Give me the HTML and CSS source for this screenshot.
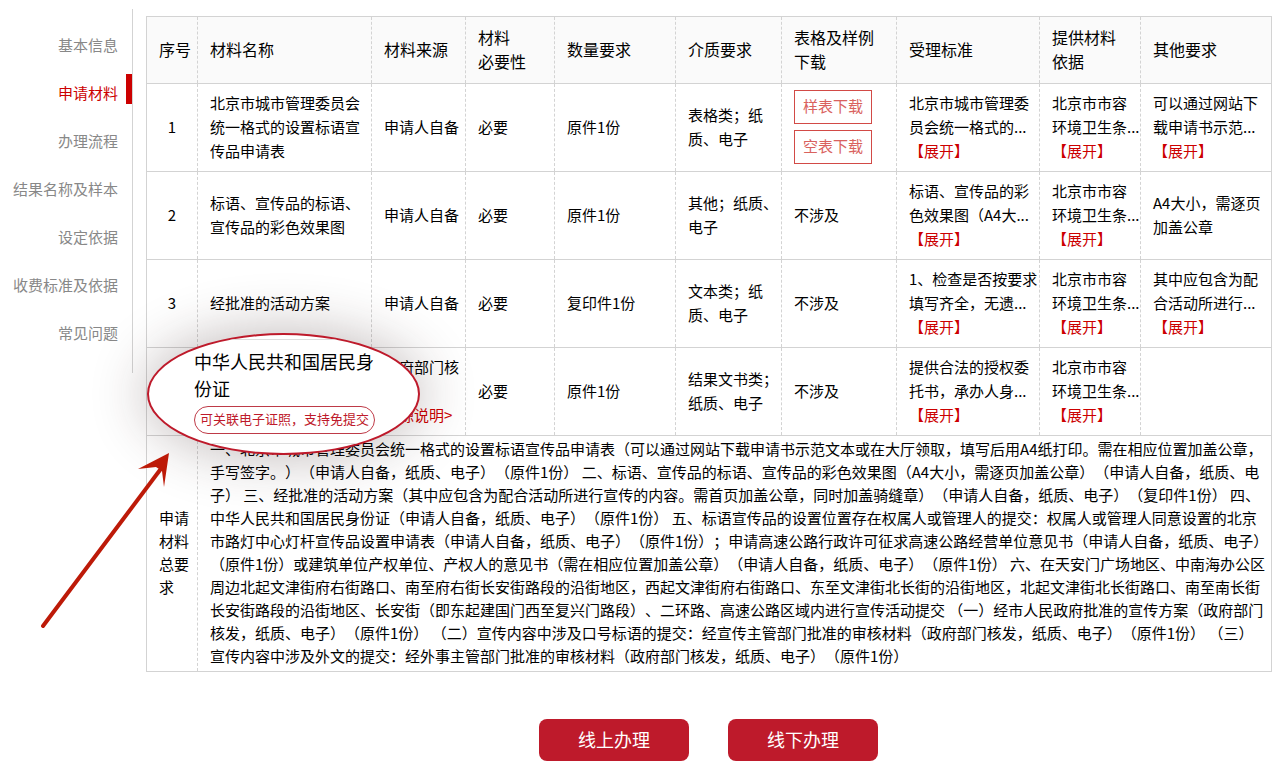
FILE: index.html
```html
<!DOCTYPE html>
<html lang="zh-CN">
<head>
<meta charset="utf-8">
<title>申请材料</title>
<link rel="stylesheet" href="styles.css">
</head>
<body>
<div class="page">
  <nav class="side">
    <a class="side-link" href="#">基本信息</a>
    <a class="side-link active" href="#">申请材料</a>
    <a class="side-link" href="#">办理流程</a>
    <a class="side-link" href="#">结果名称及样本</a>
    <a class="side-link" href="#">设定依据</a>
    <a class="side-link" href="#">收费标准及依据</a>
    <a class="side-link" href="#">常见问题</a>
  </nav>
  <main class="main">
    <table class="materials">
      <colgroup>
        <col class="c-no"><col class="c-name"><col class="c-source"><col class="c-need"><col class="c-count">
        <col class="c-media"><col class="c-down"><col class="c-std"><col class="c-basis"><col class="c-other">
      </colgroup>
      <thead>
        <tr>
          <th>序号</th><th>材料名称</th><th>材料来源</th><th>材料<br>必要性</th><th>数量要求</th>
          <th>介质要求</th><th>表格及样例<br>下载</th><th>受理标准</th><th>提供材料<br>依据</th><th>其他要求</th>
        </tr>
      </thead>
      <tbody>
        <tr class="item">
          <td class="no">1</td>
          <td>北京市城市管理委员会统一格式的设置标语宣传品申请表</td>
          <td>申请人自备</td><td>必要</td><td>原件1份</td>
          <td>表格类；纸质、电子</td>
          <td><div class="downloads"><button class="download">样表下载</button><button class="download">空表下载</button></div></td>
          <td>北京市城市管理委<br>员会统一格式的...<br><a class="more" href="#">【展开】</a></td>
          <td>北京市市容<br>环境卫生条...<br><a class="more" href="#">【展开】</a></td>
          <td>可以通过网站下<br>载申请书示范...<br><a class="more" href="#">【展开】</a></td>
        </tr>
        <tr class="item">
          <td class="no">2</td>
          <td>标语、宣传品的标语、宣传品的彩色效果图</td>
          <td>申请人自备</td><td>必要</td><td>原件1份</td>
          <td>其他；纸质、电子</td>
          <td>不涉及</td>
          <td>标语、宣传品的彩<br>色效果图（A4大...<br><a class="more" href="#">【展开】</a></td>
          <td>北京市市容<br>环境卫生条...<br><a class="more" href="#">【展开】</a></td>
          <td>A4大小，需逐页加盖公章</td>
        </tr>
        <tr class="item">
          <td class="no">3</td>
          <td>经批准的活动方案</td>
          <td>申请人自备</td><td>必要</td><td>复印件1份</td>
          <td>文本类；纸质、电子</td>
          <td>不涉及</td>
          <td>1、检查是否按要求<br>填写齐全，无遗...<br><a class="more" href="#">【展开】</a></td>
          <td>北京市市容<br>环境卫生条...<br><a class="more" href="#">【展开】</a></td>
          <td>其中应包含为配<br>合活动所进行...<br><a class="more" href="#">【展开】</a></td>
        </tr>
        <tr class="item">
          <td class="no"></td>
          <td class="focus">
            <div class="lens">
              <div class="lens-body">
                <div class="lens-name">中华人民共和国居民身份证</div>
                <span class="lens-tag">可关联电子证照，支持免提交</span>
              </div>
            </div>
            <svg class="arrow" viewBox="0 0 136 182" aria-hidden="true">
              <path d="M5 176 122 20" stroke="#bd1a08" stroke-width="4" stroke-linecap="round" fill="none"/>
              <path d="M131 3 100 19 118 17 124 21 126 37Z" fill="#bd1a08"/>
            </svg>
          </td>
          <td>政府部门核发<br><a class="source" href="#">来源说明&gt;</a></td><td>必要</td><td>原件1份</td>
          <td>结果文书类；纸质、电子</td>
          <td>不涉及</td>
          <td>提供合法的授权委<br>托书，承办人身...<br><a class="more" href="#">【展开】</a></td>
          <td>北京市市容<br>环境卫生条...<br><a class="more" href="#">【展开】</a></td>
          <td></td>
        </tr>
        <tr class="summary">
          <td>申请材料总要求</td>
          <td colspan="9">一、北京市城市管理委员会统一格式的设置标语宣传品申请表（可以通过网站下载申请书示范文本或在大厅领取，填写后用A4纸打印。需在相应位置加盖公章，手写签字。）（申请人自备，纸质、电子）（原件1份） 二、标语、宣传品的标语、宣传品的彩色效果图（A4大小，需逐页加盖公章）（申请人自备，纸质、电子） 三、经批准的活动方案（其中应包含为配合活动所进行宣传的内容。需首页加盖公章，同时加盖骑缝章）（申请人自备，纸质、电子）（复印件1份） 四、中华人民共和国居民身份证（申请人自备，纸质、电子）（原件1份） 五、标语宣传品的设置位置存在权属人或管理人的提交：权属人或管理人同意设置的北京市路灯中心灯杆宣传品设置申请表（申请人自备，纸质、电子）（原件1份）；申请高速公路行政许可征求高速公路经营单位意见书（申请人自备，纸质、电子）（原件1份）或建筑单位产权单位、产权人的意见书（需在相应位置加盖公章）（申请人自备，纸质、电子）（原件1份） 六、在天安门广场地区、中南海办公区周边北起文津街府右街路口、南至府右街长安街路段的沿街地区，西起文津街府右街路口、东至文津街北长街的沿街地区，北起文津街北长街路口、南至南长街长安街路段的沿街地区、长安街（即东起建国门西至复兴门路段）、二环路、高速公路区域内进行宣传活动提交 （一）经市人民政府批准的宣传方案（政府部门核发，纸质、电子）（原件1份） （二）宣传内容中涉及口号标语的提交：经宣传主管部门批准的审核材料（政府部门核发，纸质、电子）（原件1份） （三）<br>宣传内容中涉及外文的提交：经外事主管部门批准的审核材料（政府部门核发，纸质、电子）（原件1份）</td>
        </tr>
      </tbody>
    </table>
    <div class="actions">
      <button class="action">线上办理</button>
      <button class="action">线下办理</button>
    </div>
  </main>
</div>
</body>
</html>
```
FILE: styles.css
```css
* { box-sizing: border-box; }

body {
  margin: 0;
  background: #fff;
  color: #000;
  font: 15px/24px "Noto Sans CJK SC", sans-serif;
  text-spacing-trim: space-all;
}

a { text-decoration: none; }

button {
  font-family: inherit;
  cursor: pointer;
}

.page {
  display: flex;
  align-items: flex-start;
  gap: 13px;
  padding: 9px 7px 0 0;
}

.side {
  flex: none;
  width: 133px;
  padding: 12px 0 16px;
  border-right: 1px solid #d3d3d3;
}

.side-link {
  display: block;
  position: relative;
  padding-right: 14px;
  line-height: 48px;
  text-align: right;
  color: #888;
}

.side-link.active { color: #c00; }

.side-link.active::after {
  content: "";
  position: absolute;
  top: 5px;
  right: 0;
  width: 6px;
  height: 30px;
  background: #c00;
}

.main {
  flex: 1;
  min-width: 0;
  padding-top: 7px;
}

.materials {
  width: 100%;
  table-layout: fixed;
  border-collapse: collapse;
  border: 1px solid #d3d3d3;
}

.c-no { width: 51px; }
.c-name { width: 174px; }
.c-source { width: 94px; }
.c-need { width: 89px; }
.c-count { width: 121px; }
.c-media { width: 106px; }
.c-down { width: 115px; }
.c-std { width: 143px; }
.c-basis { width: 101px; }
.c-other { width: 131px; }

.materials th,
.materials td {
  padding: 0 0 2px 12px;
  text-align: left;
  vertical-align: middle;
  border-top: 1px solid #d3d3d3;
  border-bottom: 1px solid #d3d3d3;
}

.materials th + th,
.materials td + td { border-left: 1px dashed #d3d3d3; }

.materials th {
  height: 67px;
  background: #fafafa;
  font-size: 16px;
  font-weight: 400;
}

.item td { height: 88px; }
.materials .no { padding: 0 0 2px; text-align: center; }

.materials .summary td {
  padding: 1px 2px 4px 12px;
  line-height: 23px;
}

.more, .source { color: #c00; }

.downloads {
  display: flex;
  flex-direction: column;
  align-items: flex-start;
  gap: 6px;
}

.download {
  height: 34px;
  padding: 0 8px 2px;
  border: 1px solid #d24a46;
  background: #fff;
  color: #d9625e;
  font-size: 15px;
}

.focus { position: relative; }

.lens {
  position: absolute;
  z-index: 1;
  top: -15px;
  left: -51px;
  width: 273px;
  height: 122px;
  overflow: hidden;
  border: 2px solid #be1a2b;
  border-radius: 50%;
  background: #fff;
  box-shadow: 0 0 56px 2px rgba(50, 25, 25, 0.3);
}

.lens-body {
  margin-top: 4px;
  height: 105px;
  padding: 8px 38px 0 45px;
  border-top: 1px solid #ddd;
  border-bottom: 1px solid #ddd;
}

.lens-name {
  margin-bottom: 4px;
  font-size: 18px;
  line-height: 27px;
}

.lens-tag {
  display: flex;
  align-items: center;
  justify-content: center;
  width: 181px;
  height: 28px;
  padding-bottom: 2px;
  border: 1px solid #be3a47;
  border-radius: 14px;
  color: #be1a2b;
  font-size: 13px;
  white-space: nowrap;
}

.arrow {
  position: absolute;
  z-index: 2;
  top: 102px;
  left: -160px;
  width: 136px;
  height: 182px;
}

.actions {
  display: flex;
  justify-content: center;
  gap: 39px;
  margin-top: 47px;
}

.action {
  width: 150px;
  height: 42px;
  padding: 0 0 3px;
  border: 0;
  border-radius: 8px;
  background: #be1a2b;
  color: #fff;
  font-size: 18px;
}
```
